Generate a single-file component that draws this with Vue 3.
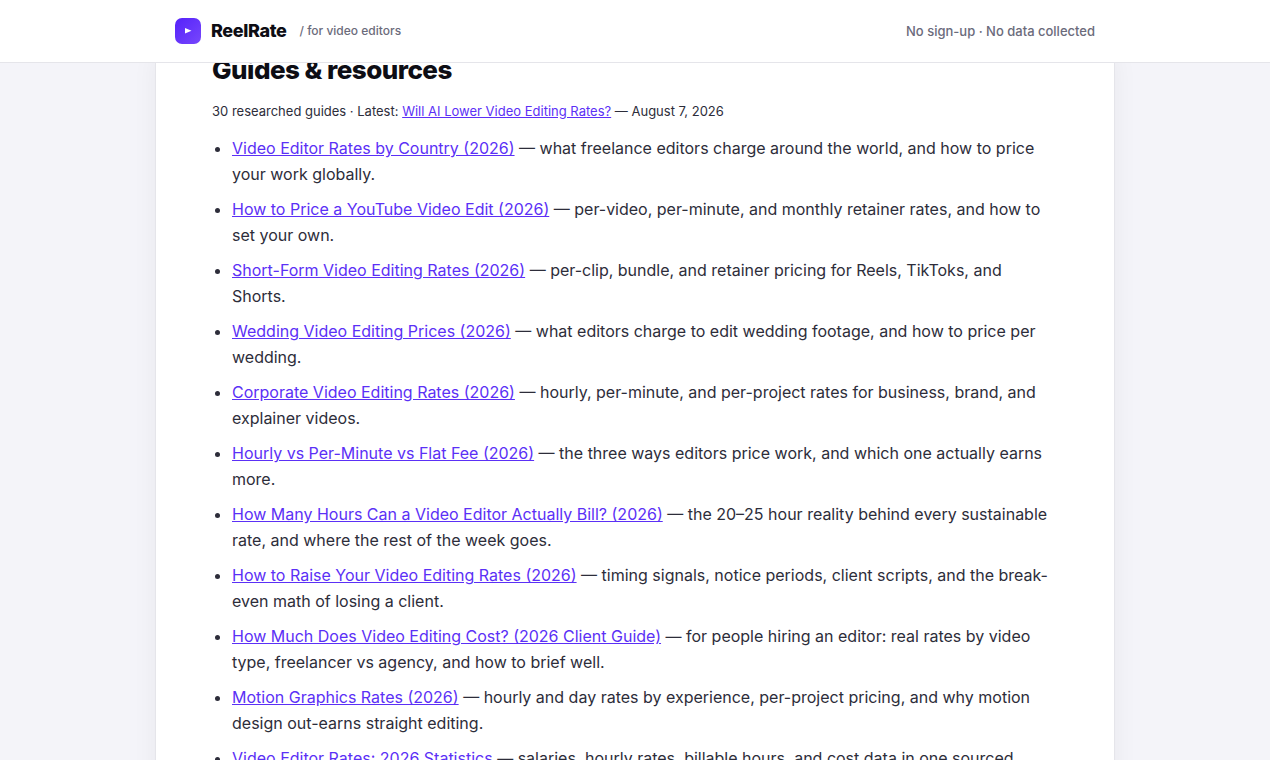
<script setup>
const guides = [
  ['Video Editor Rates by Country (2026)', 'what freelance editors charge around the world, and how to price your work globally.'],
  ['How to Price a YouTube Video Edit (2026)', 'per-video, per-minute, and monthly retainer rates, and how to set your own.'],
  ['Short-Form Video Editing Rates (2026)', 'per-clip, bundle, and retainer pricing for Reels, TikToks, and Shorts.'],
  ['Wedding Video Editing Prices (2026)', 'what editors charge to edit wedding footage, and how to price per wedding.'],
  ['Corporate Video Editing Rates (2026)', 'hourly, per-minute, and per-project rates for business, brand, and explainer videos.'],
  ['Hourly vs Per-Minute vs Flat Fee (2026)', 'the three ways editors price work, and which one actually earns more.'],
  ['How Many Hours Can a Video Editor Actually Bill? (2026)', 'the 20–25 hour reality behind every sustainable rate, and where the rest of the week goes.'],
  ['How to Raise Your Video Editing Rates (2026)', 'timing signals, notice periods, client scripts, and the break-even math of losing a client.'],
  ['How Much Does Video Editing Cost? (2026 Client Guide)', 'for people hiring an editor: real rates by video type, freelancer vs agency, and how to brief well.'],
  ['Motion Graphics Rates (2026)', 'hourly and day rates by experience, per-project pricing, and why motion design out-earns straight editing.'],
  ['Video Editor Rates: 2026 Statistics', 'salaries, hourly rates, billable hours, and cost data in one sourced'],
]
</script>

<template>
  <div class="page">
    <header class="topbar">
      <div class="topbar-inner">
        <div class="brand">
          <svg class="logo" viewBox="0 0 26 26" aria-hidden="true">
            <defs>
              <linearGradient id="logo-fill" x1="0" y1="0" x2="1" y2="1">
                <stop offset="0" stop-color="#5522fa" />
                <stop offset="1" stop-color="#7747fc" />
              </linearGradient>
            </defs>
            <rect width="26" height="26" rx="7" fill="url(#logo-fill)" />
            <path d="M10 10v5.5l6.5-2.75z" fill="#fff" />
          </svg>
          <span class="name">ReelRate</span>
          <span class="tagline">/ for video editors</span>
        </div>
        <span class="note">No sign-up · No data collected</span>
      </div>
    </header>
    <main class="sheet">
      <h2>Guides &amp; resources</h2>
      <p class="latest">
        30 researched guides · Latest: <a href="#">Will AI Lower Video Editing Rates?</a> — August 7, 2026
      </p>
      <ul>
        <li v-for="[title, summary] in guides" :key="title">
          <a href="#">{{ title }}</a> — {{ summary }}
        </li>
      </ul>
    </main>
  </div>
</template>

<style>
body {
  margin: 0;
  background: #f4f4f9;
}
</style>

<style scoped>
.page {
  height: 100vh;
  overflow: hidden;
  color: #2d2d3a;
  font: 400 16px/26px Inter, sans-serif;
}
.topbar {
  position: relative;
  z-index: 1;
  background: #fff;
  border-bottom: 1px solid #e5e5ea;
}
.topbar-inner {
  display: flex;
  align-items: center;
  justify-content: space-between;
  box-sizing: border-box;
  max-width: 960px;
  margin: 0 auto;
  padding: 18px 20px;
}
.brand {
  display: flex;
  align-items: center;
}
.logo {
  width: 26px;
  height: 26px;
  margin-right: 10px;
}
.name {
  color: #0d0d14;
  font-size: 18px;
  font-weight: 800;
  letter-spacing: -0.02em;
}
.tagline,
.note {
  color: #6b6b7b;
  font-weight: 500;
}
.tagline {
  margin-left: 13px;
  font-size: 12px;
}
.note {
  font-size: 13px;
}
.sheet {
  box-sizing: border-box;
  max-width: 960px;
  min-height: 100%;
  margin: -12px auto 0;
  padding: 0 56px;
  background: #fff;
  border: 1px solid #e5e5ea;
  box-shadow: 0 4px 24px rgba(13, 13, 40, 0.05);
}
h2 {
  margin: 0;
  color: #0d0d14;
  font-size: 26px;
  line-height: 36px;
  font-weight: 800;
  letter-spacing: -0.02em;
}
.latest {
  margin: 11px 0 12px;
  font-size: 13px;
  line-height: 24px;
}
ul {
  display: grid;
  gap: 9px;
  margin: 0;
  padding-left: 20px;
}
a {
  color: #5b30f6;
}
</style>
